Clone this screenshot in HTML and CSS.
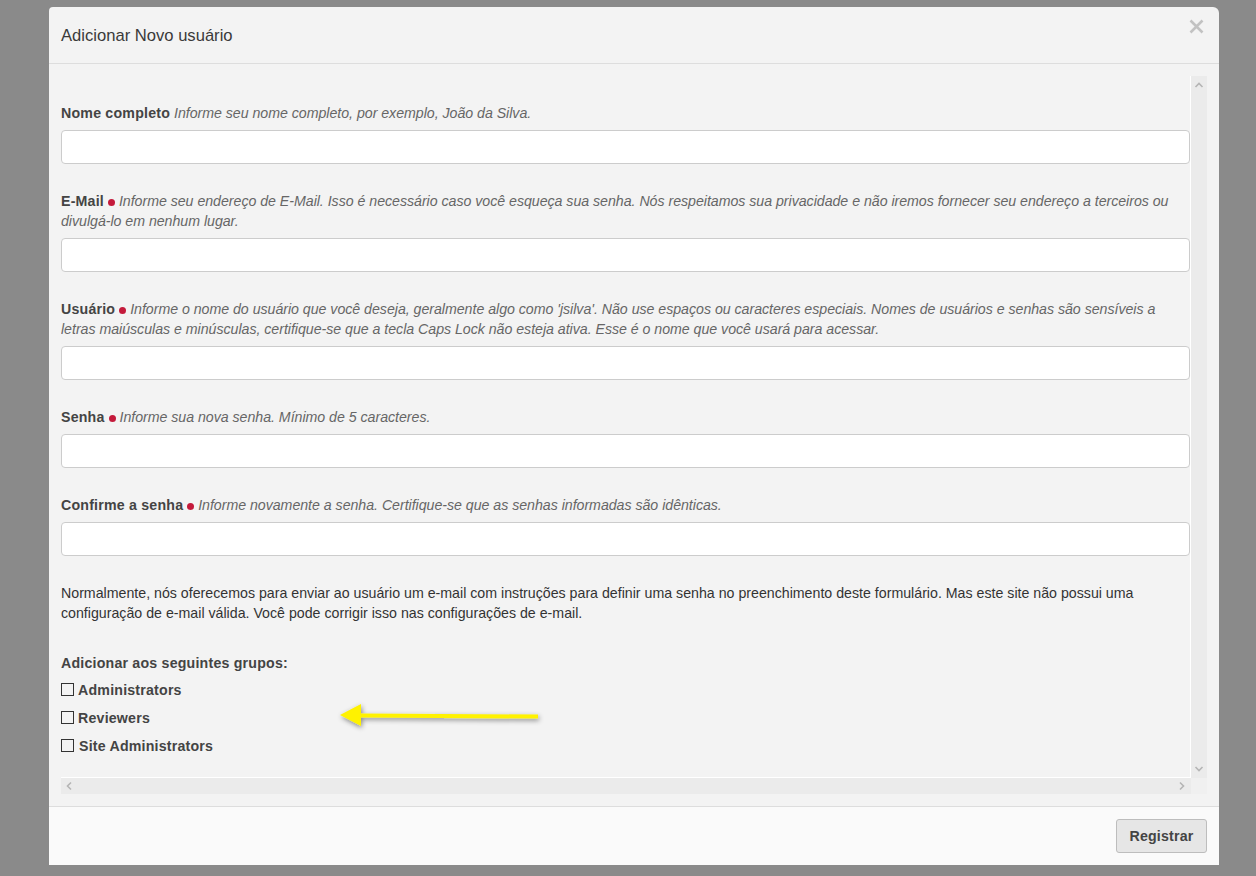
FILE: index.html
```html
<!DOCTYPE html>
<html lang="pt-BR">
<head>
<meta charset="utf-8">
<title>Adicionar Novo usuário</title>
<link rel="stylesheet" href="styles.css">
</head>
<body>
<div class="modal">
  <div class="modal-header">
    <h1 class="modal-title">Adicionar Novo usuário</h1>
    <button class="close" aria-label="Fechar">
      <svg width="15" height="15" viewBox="0 0 15 15"><path d="M1.5 1.5 L13.5 13.5 M13.5 1.5 L1.5 13.5" stroke="#c2c2c2" stroke-width="2.6" fill="none"/></svg>
    </button>
  </div>
  <div class="modal-body">
    <div class="scroller">
      <div class="content">
        <div class="field">
          <label class="field-label"><b>Nome completo</b> <i class="help">Informe seu nome completo, por exemplo, João da Silva.</i></label>
          <input class="text-input" type="text">
        </div>
        <div class="field">
          <label class="field-label"><b>E-Mail</b> <span class="req"></span> <i class="help">Informe seu endereço de E-Mail. Isso é necessário caso você esqueça sua senha. Nós respeitamos sua privacidade e não iremos fornecer seu endereço a terceiros ou divulgá-lo em nenhum lugar.</i></label>
          <input class="text-input" type="text">
        </div>
        <div class="field">
          <label class="field-label"><b>Usuário</b> <span class="req"></span> <i class="help">Informe o nome do usuário que você deseja, geralmente algo como 'jsilva'. Não use espaços ou caracteres especiais. Nomes de usuários e senhas são sensíveis a letras maiúsculas e minúsculas, certifique-se que a tecla Caps Lock não esteja ativa. Esse é o nome que você usará para acessar.</i></label>
          <input class="text-input" type="text">
        </div>
        <div class="field">
          <label class="field-label"><b>Senha</b> <span class="req"></span> <i class="help">Informe sua nova senha. Mínimo de 5 caracteres.</i></label>
          <input class="text-input" type="password">
        </div>
        <div class="field">
          <label class="field-label"><b>Confirme a senha</b> <span class="req"></span> <i class="help">Informe novamente a senha. Certifique-se que as senhas informadas são idênticas.</i></label>
          <input class="text-input" type="password">
        </div>
        <p class="note">Normalmente, nós oferecemos para enviar ao usuário um e-mail com instruções para definir uma senha no preenchimento deste formulário. Mas este site não possui uma configuração de e-mail válida. Você pode corrigir isso nas configurações de e-mail.</p>
        <div class="groups">
          <div class="groups-title">Adicionar aos seguintes grupos:</div>
          <label class="check"><span class="box"></span>Administrators</label>
          <label class="check"><span class="box"></span>Reviewers</label>
          <label class="check"><span class="box"></span><span class="sp">Site Administrators</span></label>
        </div>
      </div>
      <div class="vbar">
        <svg width="10" height="8" viewBox="0 0 10 8"><path d="M1.5 6 L5 2.5 L8.5 6" stroke="#b5b5b5" stroke-width="1.6" fill="none"/></svg>
        <svg width="10" height="8" viewBox="0 0 10 8"><path d="M1.5 2 L5 5.5 L8.5 2" stroke="#b5b5b5" stroke-width="1.6" fill="none"/></svg>
      </div>
      <div class="hbar">
        <svg width="8" height="10" viewBox="0 0 8 10"><path d="M6 1.5 L2.5 5 L6 8.5" stroke="#b5b5b5" stroke-width="1.6" fill="none"/></svg>
        <svg width="8" height="10" viewBox="0 0 8 10"><path d="M2 1.5 L5.5 5 L2 8.5" stroke="#b5b5b5" stroke-width="1.6" fill="none"/></svg>
      </div>
      <div class="corner"></div>
    </div>
    <svg class="arrow" width="230" height="40" viewBox="0 0 230 40">
      <defs>
        <filter id="sh" x="-20%" y="-60%" width="140%" height="220%">
          <feDropShadow dx="1" dy="2" stdDeviation="2.5" flood-color="#000" flood-opacity="0.45"/>
        </filter>
      </defs>
      <g filter="url(#sh)">
        <path d="M30 19.5 L207 20.5" stroke="#fff200" stroke-width="4" fill="none"/>
        <path d="M9 19 L30 8 L30 30 Z" fill="#fff200"/>
      </g>
    </svg>
  </div>
  <div class="modal-footer">
    <button class="btn">Registrar</button>
  </div>
</div>
</body>
</html>
```

FILE: styles.css
```css
html, body {
  margin: 0;
  padding: 0;
}
body {
  background: #8a8a8a;
  font-family: "Liberation Sans", Arial, sans-serif;
  font-size: 14.2px;
  color: #333;
  width: 1256px;
  height: 876px;
  overflow: hidden;
}
.modal {
  margin: 7px 0 0 49px;
  width: 1170px;
  height: 858px;
  background: #f3f3f3;
  border-radius: 4px 6px 0 0;
  display: flex;
  flex-direction: column;
}
.modal-header {
  height: 56px;
  border-bottom: 1px solid #dddddd;
  padding: 0 12px;
  display: flex;
  align-items: center;
  justify-content: space-between;
  flex: none;
}
.modal-title {
  margin: 0;
  font-size: 16.6px;
  font-weight: normal;
  color: #3a3a3a;
  padding-top: 1px;
}
.close {
  background: none;
  border: 0;
  padding: 0;
  margin: -18px 3px 0 0;
  width: 15px;
  height: 15px;
  display: block;
}
.close svg { display: block; }
.modal-body {
  padding: 12px;
  position: relative;
  flex: none;
}
.scroller {
  height: 718px;
  display: grid;
  grid-template-columns: 1129px 1px 16px;
  grid-template-rows: 701px 1px 16px;
}
.content {
  grid-column: 1;
  grid-row: 1;
  padding-top: 27px;
  overflow: hidden;
}
.vbar {
  grid-column: 3;
  grid-row: 1 / span 2;
  background: #ebebeb;
  display: flex;
  flex-direction: column;
  justify-content: space-between;
  align-items: center;
  padding: 5px 0 5px;
  border-left: 1px solid #ffffff;
  margin-left: -1px;
}
.hbar {
  grid-column: 1 / span 2;
  grid-row: 3;
  background: #ebebeb;
  display: flex;
  justify-content: space-between;
  align-items: center;
  padding: 0 5px 0 4px;
  border-top: 1px solid #ffffff;
  margin-top: -1px;
}
.corner {
  grid-column: 3;
  grid-row: 3;
  background: #f0f0f0;
}
.vbar svg, .hbar svg { display: block; }
.field {
  margin-bottom: 27px;
}
.field-label {
  display: block;
  line-height: 20px;
  height: auto;
  margin-bottom: 7px;
}
.field-label b {
  font-weight: bold;
  color: #444;
  letter-spacing: 0.2px;
}
.help {
  color: #666;
  font-style: italic;
  letter-spacing: -0.03px;
}
.req {
  display: inline-block;
  width: 7px;
  height: 7px;
  border-radius: 50%;
  background: #c41a3b;
  vertical-align: 0px;
}
.text-input {
  display: block;
  box-sizing: border-box;
  width: 100%;
  height: 34px;
  margin: 0;
  border: 1px solid #cccccc;
  border-radius: 4px;
  background: #ffffff;
  font: inherit;
}
.note {
  margin: 0;
  line-height: 20px;
  color: #333;
}
.groups {
  margin-top: 30px;
}
.groups-title {
  font-weight: bold;
  line-height: 20px;
  color: #444;
  letter-spacing: 0.2px;
  margin-bottom: 7px;
}
.check {
  display: flex;
  align-items: center;
  height: 20px;
  margin-bottom: 8px;
  font-weight: bold;
  letter-spacing: 0.2px;
  color: #444;
}
.check .sp {
  margin-left: 1px;
}
.box {
  width: 11px;
  height: 11px;
  border: 1px solid #333;
  margin: -2px 4px 0 0;
  flex: none;
}
.arrow {
  position: absolute;
  left: 282px;
  top: 632px;
}
.modal-footer {
  border-top: 1px solid #dddddd;
  background: #fafafa;
  flex: 1;
  display: flex;
  justify-content: flex-end;
  align-items: flex-start;
  padding: 12px 12px 0 0;
}
.btn {
  width: 91px;
  height: 34px;
  background: #e6e6e6;
  border: 1px solid #bdbdbd;
  border-radius: 3px;
  font-family: "Liberation Sans", Arial, sans-serif;
  font-size: 14.2px;
  font-weight: bold;
  letter-spacing: 0.2px;
  color: #444;
  padding: 0;
}
```
